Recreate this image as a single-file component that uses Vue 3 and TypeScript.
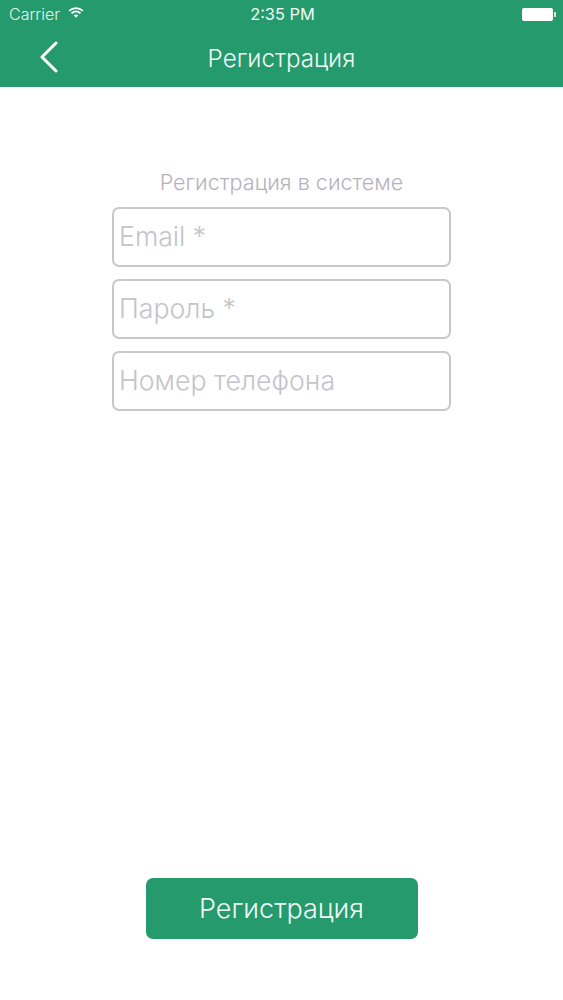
<script setup lang="ts">
const fields: string[] = ['Email *', 'Пароль *', 'Номер телефона']
</script>

<template>
  <div class="screen">
    <header class="top">
      <div class="status">
        <div class="carrier">
          <span>Carrier</span>
          <svg class="wifi" width="16" height="11" viewBox="0 0 17 12">
            <path d="M1 4.2C5.4 0.2 11.6 0.2 16 4.2" fill="none" stroke="#fff" stroke-width="1.9" />
            <path d="M3.6 6.8C6.6 4.2 10.4 4.2 13.4 6.8" fill="none" stroke="#fff" stroke-width="1.9" />
            <path d="M8.5 11.6L5.9 9C7.4 7.8 9.6 7.8 11.1 9Z" fill="#fff" />
          </svg>
        </div>
        <div class="time">2:35 PM</div>
        <div class="battery-wrap">
          <div class="battery"></div>
          <div class="nub"></div>
        </div>
      </div>
      <div class="nav">
        <svg class="back" width="20" height="32" viewBox="0 0 20 32">
          <path d="M17 2L3 16L17 30" fill="none" stroke="#fff" stroke-width="3" stroke-linecap="round" stroke-linejoin="round" />
        </svg>
        <div class="title">Регистрация</div>
      </div>
    </header>

    <main class="content">
      <div class="form">
        <div class="heading">Регистрация в системе</div>
        <div v-for="f in fields" :key="f" class="field">{{ f }}</div>
      </div>
      <button class="submit" type="button">Регистрация</button>
    </main>
  </div>
</template>

<style scoped>
.screen {
  width: 563px;
  height: 1000px;
  display: flex;
  flex-direction: column;
  background: #fff;
  font-family: "Inter", "Liberation Sans", sans-serif;
  overflow: hidden;
}
.top {
  height: 87px;
  background: #259a6c;
  color: #fff;
  flex: none;
  display: flex;
  flex-direction: column;
}
.status {
  height: 29px;
  padding: 0 7px 1px 9px;
  box-sizing: border-box;
  display: grid;
  grid-template-columns: 1fr auto 1fr;
  align-items: center;
  font-size: 16px;
  font-weight: 300;
}
.carrier {
  display: flex;
  align-items: center;
  gap: 8px;
  color: #e4f3ed;
}
.wifi {
  margin-top: -3px;
}
.time {
  font-size: 16.4px;
  font-weight: 400;
  text-align: center;
  color: #f4faf8;
}
.battery-wrap {
  display: flex;
  align-items: center;
  justify-content: flex-end;
  gap: 1px;
}
.battery {
  width: 31px;
  height: 13px;
  background: #fff;
  border-radius: 2px;
}
.nub {
  width: 2px;
  height: 5px;
  background: #cfe9de;
}
.nav {
  position: relative;
  flex: 1;
  display: flex;
  align-items: center;
  justify-content: center;
}
.back {
  position: absolute;
  left: 39px;
  top: 12px;
}
.title {
  font-size: 24.2px;
  font-weight: 300;
  color: #f1f9f6;
}
.content {
  flex: 1;
  display: flex;
  flex-direction: column;
  align-items: center;
  justify-content: space-between;
  padding: 81px 0 61px;
}
.form {
  width: 339px;
  display: flex;
  flex-direction: column;
  gap: 12px;
}
.heading {
  text-align: center;
  font-size: 21.6px;
  font-weight: 300;
  line-height: 28px;
  margin-bottom: -1px;
  color: #b5b2bd;
}
.field {
  box-sizing: border-box;
  height: 60px;
  border: 2px solid #c9c7cd;
  border-radius: 7px;
  padding: 0 5px 2px;
  display: flex;
  align-items: center;
  font-size: 26.7px;
  font-weight: 300;
  color: #c4c4c9;
}
.submit {
  width: 272px;
  height: 61px;
  border: none;
  border-radius: 7px;
  background: #259a6c;
  color: #f1f9f6;
  font-family: inherit;
  font-size: 27px;
  font-weight: 300;
  padding: 0;
}
</style>
